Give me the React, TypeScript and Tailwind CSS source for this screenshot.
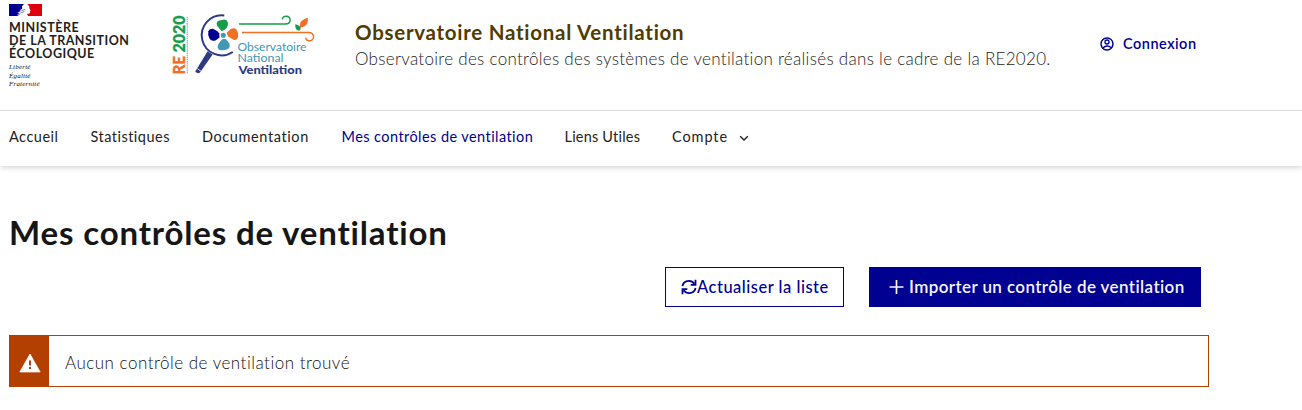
import React from "react";

function GovernmentBrand() {
  return (
    <div className="w-[164px] shrink-0 pl-[9px] pt-1">
      <svg width="33" height="12" viewBox="0 0 33 12" className="block">
        <path d="M0 0h17v12H0z" fill="#000091" />
        <path d="M17 0h16v12H17z" fill="#e1000f" />
        <path d="M15 0h3.2l2 2.3.3 2.4 1.2 2-.8.6.2 1.4-1 1-1.6-.3-.3 1.4.9 1.2H8l3.6-1.8-3.7.5 3-1.8-2.6-.3 3.8-1.7-1.5-.7 2.6-1.5-.2-2.4z" fill="#fff" />
        <path d="M12.5 6.5l3.8-1M11.4 9l4-1.5" stroke="#5555a5" strokeWidth=".8" />
      </svg>
      <div className="mt-[5px] whitespace-nowrap font-['Lato',sans-serif] text-[12.5px] font-bold leading-[13px] tracking-[0.5px] text-[#1e1e1e]">
        <p>MINISTÈRE</p>
        <p>DE LA TRANSITION</p>
        <p>ÉCOLOGIQUE</p>
      </div>
      <div className="mt-[3px] font-['Liberation_Serif',serif] text-[7px] italic leading-[8.5px] tracking-[0.2px] text-[#111]">
        <p>Liberté</p>
        <p>Égalité</p>
        <p>Fraternité</p>
      </div>
    </div>
  );
}

function ObservatoryLogo() {
  return (
    <svg width="156" height="74" viewBox="164 8 156 74" className="mt-2 block shrink-0" fontFamily="Lato, sans-serif">
      <g transform="translate(184.6 74.5) rotate(-90)" fontSize="16" fontWeight="900">
        <text x="0" y="0" fill="#f07125" stroke="#f07125" strokeWidth=".3" textLength="18.5" lengthAdjust="spacingAndGlyphs">RE</text>
        <text x="22" y="0" fill="#149d4b" stroke="#149d4b" strokeWidth=".3" textLength="37" lengthAdjust="spacingAndGlyphs">2020</text>
      </g>
      <path d="M187.3 17v57" stroke="#a5a5a5" strokeWidth="1.3" strokeDasharray="1.2 .7" />
      <path d="M224.3 15.5A20 20 0 1 0 232.8 52" fill="none" stroke="#2e3b83" strokeWidth="2" />
      <path d="M207.6 51.2l5 3.4-12.4 17.6q-2.4 2.4-5-.8z" fill="#2e3b83" />
      <path d="M197.3 68.5l4 3" stroke="#fff" strokeWidth=".8" />
      <path d="M221.8 31.2l-4.7-5.4q-1.6-4 2.2-5.2l5.2-1q3.6.6 3.4 4.8-.6 3.6-3.2 5.4z" fill="#149d4b" />
      <path d="M227.2 34.8l-.4-2.4 4-3.4q3.6-1.6 5.4 0 2.6 3.8 1.8 8-.8 3.4-4 3l-5.4-3.2z" fill="#f07125" />
      <path d="M219.4 35.4l.2 2.2-4.2 2.8q-4 1.2-5.8-1.6-2.2-4.2-1.2-7.6 1-2.6 4.6-2.4 4 1.8 6.2 4.4z" fill="#000091" />
      <path d="M223.6 39l2.6.2 3 4q1.6 4-1.4 5.8-4 1.8-8.2 1-3-1.6-1.4-5.4 2-3.4 4-5.4z" fill="#4098b5" />
      <circle cx="223.3" cy="35.2" r="3.1" fill="#4098b5" stroke="#fff" strokeWidth="1.1" />
      <path d="M239 24h46.5c6 0 6-7.8.8-7.8-2.6 0-4 1.3-3.8 3.3" fill="none" stroke="#149d4b" strokeWidth="1.4" />
      <path d="M242 32.5h66.5c6.5 0 6.5 8.3 1 8.3-2.5 0-3.8-1.4-3.5-3.2" fill="none" stroke="#f07125" strokeWidth="1.4" />
      <path d="M307.8 17.8c.8 6.4-2.4 9.4-6.6 9.4l-1.5 2.4.2-3.4c-.3-5.2 3.7-7 7.9-8.4z" fill="#f07125" />
      <path d="M295.3 24.3c4.3 1 5.8 2.5 4.7 6.3-3.7.2-5-2.1-4.7-6.3z" fill="#149d4b" />
      <text x="237.5" y="51" fontSize="11" fill="#4098b5" textLength="69" lengthAdjust="spacingAndGlyphs">Observatoire</text>
      <text x="237.5" y="62" fontSize="11" fill="#4098b5" textLength="46" lengthAdjust="spacingAndGlyphs">National</text>
      <text x="238.5" y="73.8" fontSize="11.5" fontWeight="900" fill="#2e3b83" textLength="63.5" lengthAdjust="spacingAndGlyphs">Ventilation</text>
    </svg>
  );
}

function AccountIcon() {
  return (
    <svg width="16" height="16" viewBox="0 0 24 24" fill="currentColor">
      <path d="M12 2c5.52 0 10 4.48 10 10s-4.48 10-10 10S2 17.52 2 12 6.48 2 12 2Zm.16 14a6.98 6.98 0 0 0-5.147 2.256A7.97 7.97 0 0 0 12 20a7.97 7.97 0 0 0 5.167-1.892A6.98 6.98 0 0 0 12.16 16ZM12 4a8 8 0 0 0-6.384 12.821A8.98 8.98 0 0 1 12.16 14a8.97 8.97 0 0 1 6.362 2.634A8 8 0 0 0 12 4Zm0 1a4 4 0 1 1 0 8 4 4 0 0 1 0-8Zm0 2a2 2 0 1 0 0 4 2 2 0 0 0 0-4Z" />
    </svg>
  );
}

function Header() {
  return (
    <header className="flex h-[110px] items-start">
      <GovernmentBrand />
      <ObservatoryLogo />
      <div className="ml-[35px] w-[744px] shrink-0 whitespace-nowrap pt-[18px]">
        <p className="text-[20.5px] font-bold leading-7 tracking-[0.73px] text-[#503b00]">Observatoire National Ventilation</p>
        <p className="text-[17px] font-light leading-[26px] tracking-[0.3px] text-[#1c1c1c]">
          Observatoire des contrôles des systèmes de ventilation réalisés dans le cadre de la RE2020.
        </p>
      </div>
      <a className="mt-8 flex h-6 items-center gap-2 whitespace-nowrap text-[14.5px] font-semibold tracking-[0.5px] text-[#000091]">
        <AccountIcon />
        Connexion
      </a>
    </header>
  );
}

function Navigation() {
  return (
    <nav className="flex h-[56px] items-center whitespace-nowrap border-t border-[#ddd] pb-1 pl-[9px] text-[14.5px] tracking-[0.43px] text-[#222] shadow-[0_3px_5px_-1px_rgba(0,0,18,0.16)]">
      <a className="w-[81.5px] tracking-[0.5px]">Accueil</a>
      <a className="w-[111.5px] tracking-[0.48px]">Statistiques</a>
      <a className="w-[139.5px] tracking-[0.6px]">Documentation</a>
      <a className="w-[223px] text-[#000091]">Mes contrôles de ventilation</a>
      <a className="w-[107.5px] tracking-[0.2px]">Liens Utiles</a>
      <a className="flex items-center gap-2">
        <span className="w-[56px] tracking-[0.9px]">Compte</span>
        <svg width="16" height="16" viewBox="0 0 16 16" className="mt-[2px]">
          <path d="M4.2 6.2 8 10l3.8-3.8" fill="none" stroke="currentColor" strokeWidth="1.4" />
        </svg>
      </a>
    </nav>
  );
}

function RefreshIcon() {
  return (
    <svg width="16" height="16" viewBox="0 0 16 16" fill="none" stroke="currentColor" strokeWidth="1.8">
      <path d="M1.5 7.2C2.1 1.8 9.8-.2 13.2 4.8M14.5.8v5H9.7M14.5 8.8c-.6 5.4-8.3 7.4-11.7 2.4M1.5 15.2v-5h4.8" />
    </svg>
  );
}

function Actions() {
  return (
    <div className="mt-[13px] flex justify-end gap-[25px] whitespace-nowrap pr-[101px]">
      <button className="flex h-10 w-[179px] items-center border border-[#000091] pl-[15px] text-[16.5px] font-medium tracking-[0.5px] text-[#000091]">
        <RefreshIcon />
        Actualiser la liste
      </button>
      <button className="flex h-10 w-[332px] items-center gap-[5px] bg-[#000091] pl-5 text-[17px] font-semibold tracking-[0.4px] text-[#f5f5fe]">
        <svg width="15" height="16" viewBox="0 0 15 16">
          <path d="M7.5 1v14M.5 8h14" stroke="currentColor" strokeWidth="1.7" />
        </svg>
        Importer un contrôle de ventilation
      </button>
    </div>
  );
}

function Alert() {
  return (
    <div className="ml-[9px] mt-7 flex h-[52px] w-[1200px] border border-[#b34000]">
      <div className="flex w-[39px] items-center justify-center bg-[#b34000]">
        <svg width="22" height="20" viewBox="0 0 22 20" className="mt-[3px]">
          <path d="M11 1 21.2 19H.8z" fill="#fff" stroke="#fff" strokeWidth=".7" strokeLinejoin="round" />
          <path d="M10 7.5h2v5h-2zM10 14h2v2h-2z" fill="#b34000" />
        </svg>
      </div>
      <p className="flex items-center whitespace-nowrap pl-4 pt-1 text-[17px] font-light tracking-[0.5px] text-[#111]">
        Aucun contrôle de ventilation trouvé
      </p>
    </div>
  );
}

export default function App() {
  return (
    <div className="h-[410px] w-[1302px] overflow-hidden bg-white font-['Lato',sans-serif]">
      <Header />
      <Navigation />
      <main>
        <h1 className="ml-[9px] pt-[46px] pb-[2px] text-[33px] font-bold leading-10 tracking-[0.84px] text-[#161616]">Mes contrôles de ventilation</h1>
        <Actions />
        <Alert />
      </main>
    </div>
  );
}
